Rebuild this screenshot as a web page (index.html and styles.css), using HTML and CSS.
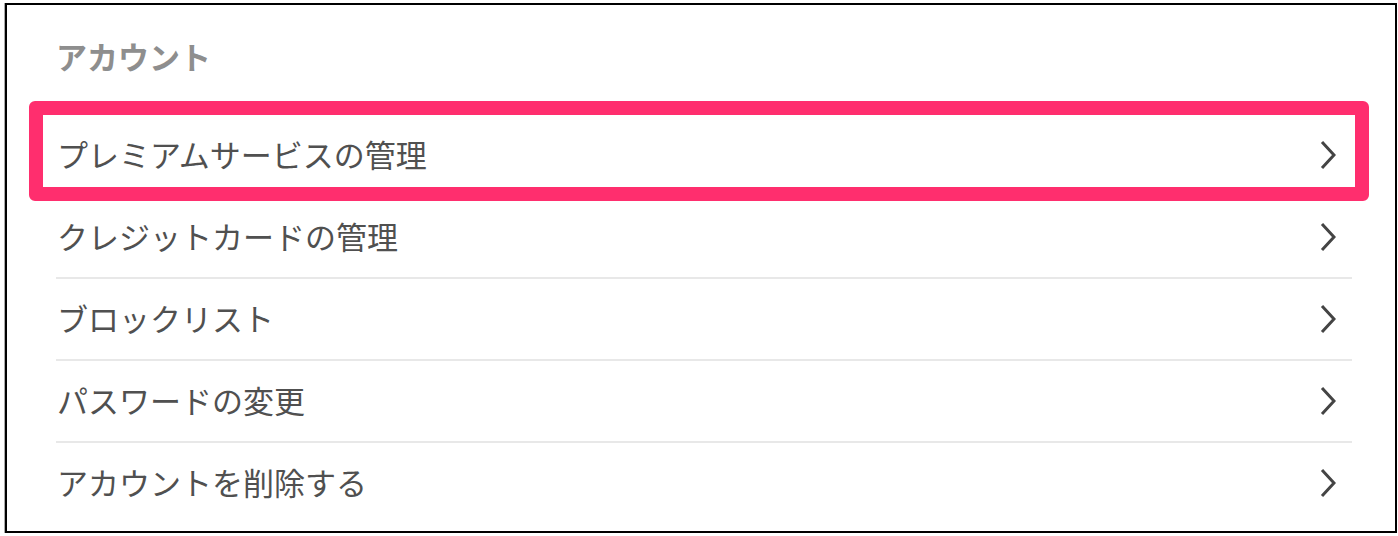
FILE: index.html
```html
<!DOCTYPE html>
<html lang="ja">
<head>
    <meta charset="UTF-8">
    <meta name="viewport" content="width=device-width, initial-scale=1.0">
    <title>アカウント</title>
    <link rel="stylesheet" href="styles.css">
</head>
<body>

    <div class="card">
        <h2 class="section-title">アカウント</h2>

        <ul class="menu">
            <li class="menu-item">
                <span class="menu-label">プレミアムサービスの管理</span>
                <svg class="chevron" viewBox="0 0 16 30" width="16" height="30"><path d="M2 2 L14 15 L2 28" /></svg>
                <!-- highlight frame over the first row -->
                <span class="highlight"></span>
            </li>
            <li class="menu-item">
                <span class="menu-label">クレジットカードの管理</span>
                <svg class="chevron" viewBox="0 0 16 30" width="16" height="30"><path d="M2 2 L14 15 L2 28" /></svg>
            </li>
            <li class="menu-item">
                <span class="menu-label">ブロックリスト</span>
                <svg class="chevron" viewBox="0 0 16 30" width="16" height="30"><path d="M2 2 L14 15 L2 28" /></svg>
            </li>
            <li class="menu-item">
                <span class="menu-label">パスワードの変更</span>
                <svg class="chevron" viewBox="0 0 16 30" width="16" height="30"><path d="M2 2 L14 15 L2 28" /></svg>
            </li>
            <li class="menu-item">
                <span class="menu-label">アカウントを削除する</span>
                <svg class="chevron" viewBox="0 0 16 30" width="16" height="30"><path d="M2 2 L14 15 L2 28" /></svg>
            </li>
        </ul>
    </div>

</body>
</html>
```

FILE: styles.css
```css
body {
    margin: 0;
    padding: 3px 1px 3px 5px;
    background-color: #fff;
    font-family: "Noto Sans CJK JP", "Noto Sans", sans-serif;
}

.card {
    height: 526px;
    border: 2px solid #000;
    box-shadow: -1px 0 0 #aaa;
    padding: 0 43px 0 49px;
    background-color: #fff;
}

.section-title {
    margin: 31px 0 39px 0;
    font-size: 31px;
    line-height: 40px;
    font-weight: bold;
    color: #8e8e8e;
}

.menu {
    list-style: none;
    margin: 0;
    padding: 0;
}

.menu-item {
    position: relative;
    display: flex;
    align-items: center;
    justify-content: space-between;
    height: 80px;
    border-bottom: 2px solid #e8e8e8;
}

.menu-item:last-child {
    border-bottom: none;
}

.menu-label {
    font-size: 31px;
    color: #505050;
    padding: 0 0 4px 1px;
}

.chevron {
    margin-right: 16px;
    fill: none;
    stroke: #444;
    stroke-width: 3;
}

.highlight {
    position: absolute;
    top: -14px;
    bottom: -6px;
    left: -27px;
    right: -17px;
    border: 14px solid #ff2e6e;
    border-radius: 6px;
}
```
